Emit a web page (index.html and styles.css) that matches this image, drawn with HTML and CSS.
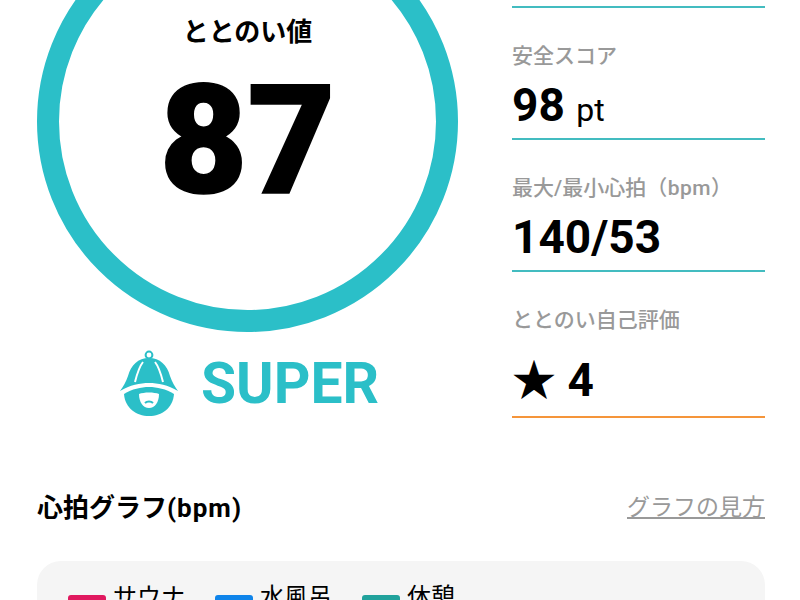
FILE: index.html
```html
<!DOCTYPE html>
<html lang="ja">
<head>
  <meta charset="UTF-8" />
  <title>ととのい値</title>
  <link rel="stylesheet" href="styles.css">
</head>
<body>
  <div class="page">
    <div class="summary">
      <div class="gauche">
        <div class="cercle">
          <div class="cercleLabel">ととのい値</div>
          <div class="cercleValeur">87</div>
        </div>
        <div class="rang">
          <svg class="rangIcon" viewBox="0 0 60 68" aria-hidden="true">
            <circle cx="30" cy="5" r="3.4" fill="none" stroke="#2bbfc8" stroke-width="2"/>
            <path d="M30 8C19 8 12 15 9 26C7 32 4 37 1 41C11 35 21 33 30 33C39 33 49 35 59 41C56 37 53 32 51 26C48 15 41 8 30 8Z" fill="#2bbfc8"/>
            <path d="M5 44C13 39 22 37 30 37C38 37 47 39 55 44C54 58 43 66 30 66C17 66 6 58 5 44Z" fill="#2bbfc8"/>
            <path d="M24 12C20 17 18 24 16 32M36 12C40 17 42 24 44 32" fill="none" stroke="#fff" stroke-width="2"/>
            <path d="M20 44C25 42 35 42 40 44C40 52 36 58 30 58C24 58 20 52 20 44Z" fill="#fff"/>
            <path d="M26 53C28 51 32 51 34 53" fill="none" stroke="#2bbfc8" stroke-width="2"/>
          </svg>
          <span class="rangNom">SUPER</span>
        </div>
      </div>
      <div class="droite">
        <div class="stat statHaut"></div>
        <div class="stat">
          <div class="statLabel">安全スコア</div>
          <div class="statValeur">98 <span class="unite">pt</span></div>
        </div>
        <div class="stat">
          <div class="statLabel">最大/最小心拍<span class="bpm">（bpm）</span></div>
          <div class="statValeur">140/53</div>
        </div>
        <div class="stat statEval">
          <div class="statLabel">ととのい自己評価</div>
          <div class="statValeur"><span class="etoile">★</span> 4</div>
        </div>
      </div>
    </div>

    <div class="grapheTete">
      <h2>心拍グラフ<span class="bpm">(bpm)</span></h2>
      <a class="grapheLien" href="#">グラフの見方</a>
    </div>

    <div class="graphe">
      <div class="legende">
        <div class="legendeItem"><span class="carre sauna"></span>サウナ</div>
        <div class="legendeItem"><span class="carre mizu"></span>水風呂</div>
        <div class="legendeItem"><span class="carre repos"></span>休憩</div>
      </div>
    </div>
  </div>
</body>
</html>
```

FILE: styles.css
```css
* { box-sizing: border-box; }
html, body {
  margin: 0; padding: 0; height: 100%;
  background: white; color: black; overflow: hidden;
  font-family: Roboto, "Noto Sans CJK JP", sans-serif;
}
.page {
  margin-top: -89px;
  padding: 0 35px 0 37px;
}
.summary { display: flex; gap: 54px; }
.gauche { width: 421px; flex: none; }
.droite { flex: 1; }

.cercle {
  width: 421px; height: 421px;
  border: 22px solid #2bbfc8; border-radius: 50%;
  display: flex; flex-direction: column; align-items: center;
  padding-top: 81px;
}
.cercleLabel { font-size: 26px; font-weight: 700; line-height: 36px; }
.cercleValeur {
  font-size: 152px; font-weight: 900; line-height: 156px;
  margin-top: 13px;
  -webkit-text-stroke: 1.5px black;
}

.rang {
  display: flex; align-items: center; gap: 22px;
  margin-top: 18px; padding-left: 82px;
}
.rangIcon { width: 60px; height: 68px; flex: none; }
.rangNom { font-size: 57px; font-weight: 700; color: #2bbfc8; line-height: 66px; }

.stat {
  height: 132px; padding-top: 33px;
  border-bottom: 2px solid #43bcc0;
}
.statHaut { height: 97px; padding: 0; }
.statEval { height: 146px; border-bottom-color: #f5953a; }
.statLabel {
  font-size: 21px; font-weight: 500; color: #999;
  line-height: 30px;
}
.statLabel .bpm { letter-spacing: .5px; }
.statValeur {
  font-size: 46px; font-weight: 700; line-height: 52px;
  margin-top: 8px;
}
.statEval .statValeur { margin-top: 19px; }
.unite { font-size: 32px; font-weight: 400; }
.etoile { font-size: 44px; }

.grapheTete {
  display: flex; justify-content: space-between; align-items: center;
  margin-top: 72px;
}
.grapheTete h2 { margin: 0; font-size: 26px; font-weight: 700; line-height: 36px; }
.grapheTete .bpm { letter-spacing: 1px; }
.grapheLien { font-size: 23px; color: #999; line-height: 36px; }

.graphe {
  margin-top: 35px; height: 300px;
  background: #f5f5f5; border-radius: 24px;
  padding: 19px 31px;
}
.legende { display: flex; gap: 30px; }
.legendeItem { display: flex; align-items: flex-start; gap: 7px; font-size: 24px; line-height: 34px; }
.carre { width: 38px; height: 18px; border-radius: 3px; margin-top: 15px; }
.sauna { background: #e0195f; }
.mizu { background: #0f84ea; }
.repos { background: #21a29c; }
```
